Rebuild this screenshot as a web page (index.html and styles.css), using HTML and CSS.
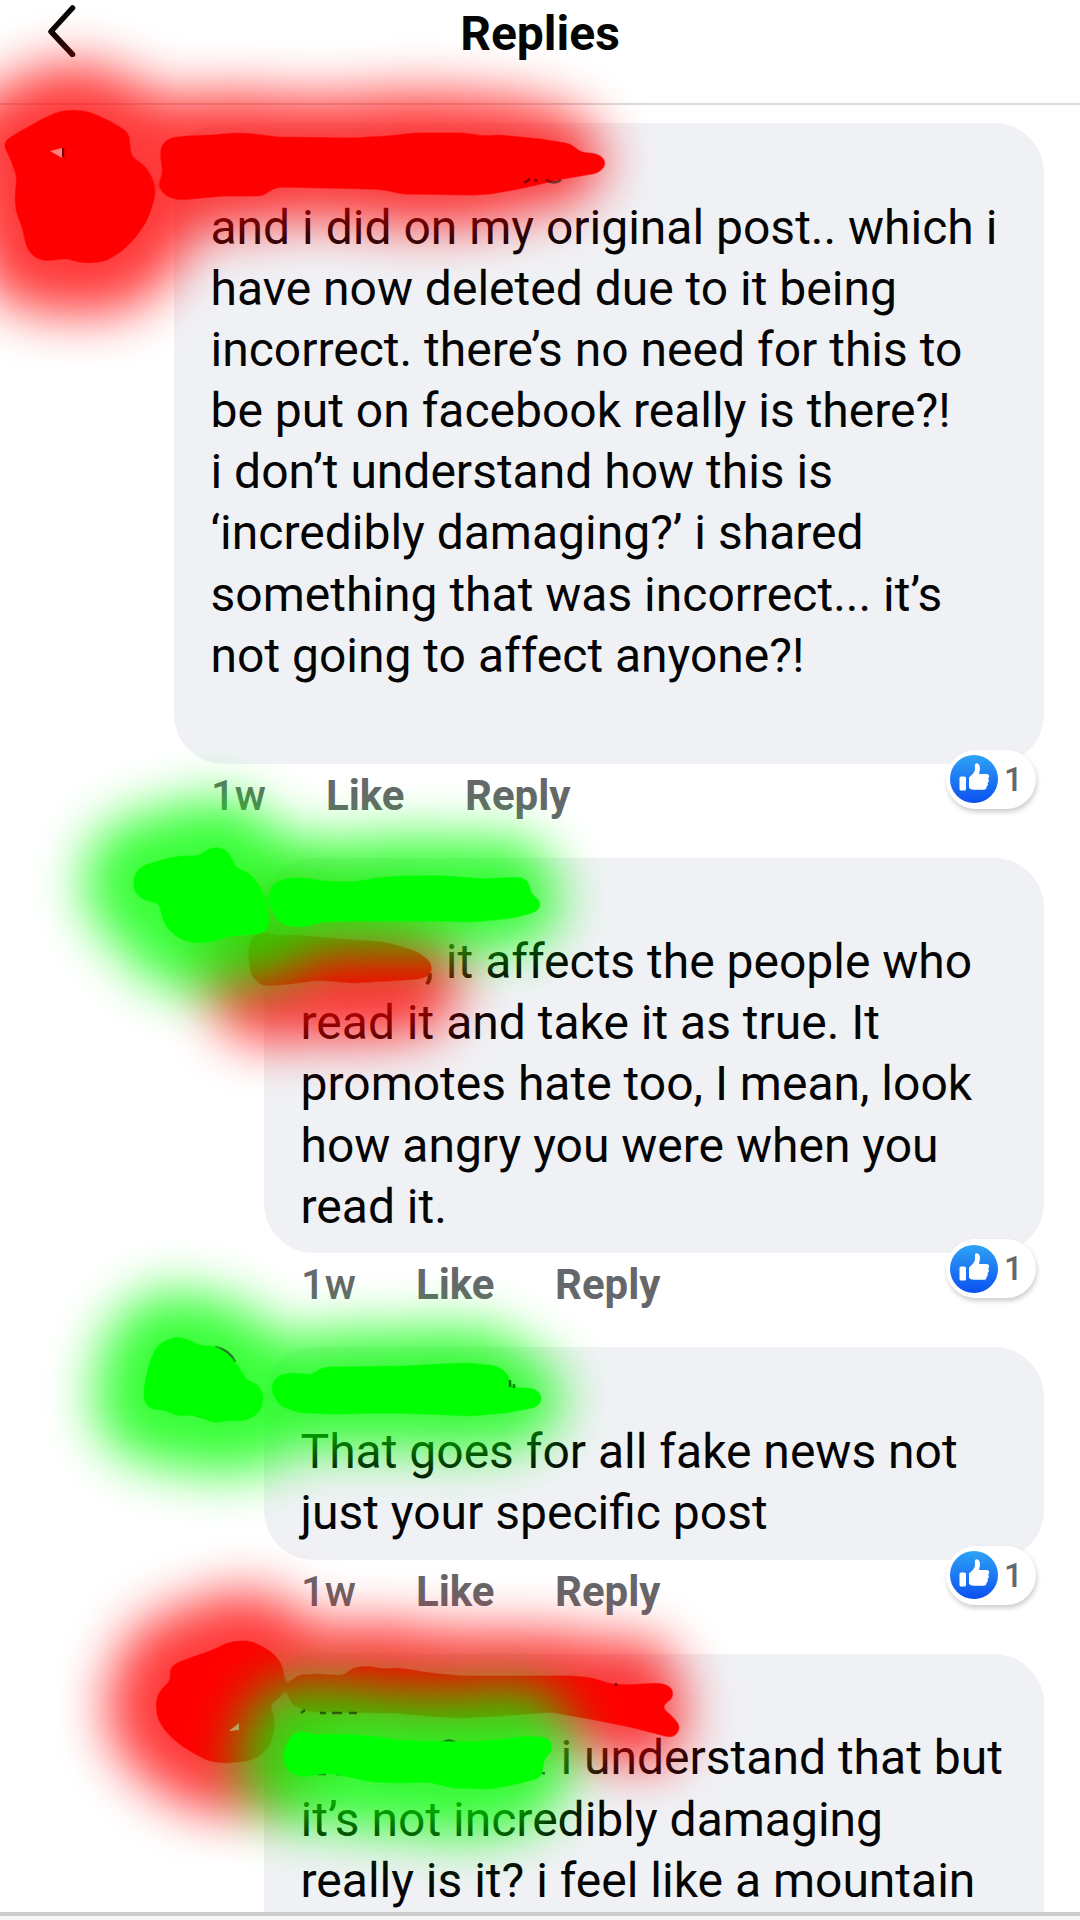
FILE: index.html
```html
<!DOCTYPE html>
<html lang="en">
<head>
  <meta charset="UTF-8" />
  <meta name="viewport" content="width=device-width, initial-scale=1.0" />
  <title>Replies</title>
  <link rel="stylesheet" href="styles.css">
</head>
<body>
  <div class="screen">
    <header class="header">
      <svg class="back" viewBox="0 0 30 52"><path d="M26.500 3 5 26.500l21.500 23" /></svg>
      <h1>Replies</h1>
    </header>

    <main class="thread">
      <article class="comment">
        <div class="bubble">
          <div class="name"></div>
          <p>and i did on my original post.. which i<br>have now deleted due to it being<br>incorrect. there’s no need for this to<br>be put on facebook really is there?!<br>i don’t understand how this is<br>‘incredibly damaging?’ i shared<br>something that was incorrect... it’s<br>not going to affect anyone?!<br>&nbsp;</p>
        </div>
        <div class="actions"><span class="time">1w</span><span class="like">Like</span><span>Reply</span></div>
        <div class="reactions"><svg viewBox="0 0 48 48"><use href="#thumb" /></svg><span>1</span></div>
      </article>

      <article class="comment nested">
        <div class="bubble">
          <div class="name"></div>
          <p><span class="tag tag-short"></span>, it affects the people who<br>read it and take it as true. It<br>promotes hate too, I mean, look<br>how angry you were when you<br>read it.</p>
        </div>
        <div class="actions"><span class="time">1w</span><span class="like">Like</span><span>Reply</span></div>
        <div class="reactions"><svg viewBox="0 0 48 48"><use href="#thumb" /></svg><span>1</span></div>
      </article>

      <article class="comment nested">
        <div class="bubble">
          <div class="name"></div>
          <p>That goes for all fake news not<br>just your specific post</p>
        </div>
        <div class="actions"><span class="time">1w</span><span class="like">Like</span><span>Reply</span></div>
        <div class="reactions"><svg viewBox="0 0 48 48"><use href="#thumb" /></svg><span>1</span></div>
      </article>

      <article class="comment nested">
        <div class="bubble bubble-cut">
          <div class="name"></div>
          <p><span class="tag tag-long"></span>i understand that but<br>it’s not incredibly damaging<br>really is it? i feel like a mountain</p>
        </div>
      </article>
    </main>

    <div class="bottom-bar"></div>

    <!-- marker strokes over the avatars and names -->
    <svg class="marker" viewBox="0 0 1080 1920">
      <defs>
        <linearGradient id="blue" x1="0" y1="0" x2="0" y2="1">
          <stop offset="0" stop-color="#2ea3f5" />
          <stop offset="1" stop-color="#0c50f0" />
        </linearGradient>
        <g id="thumb">
          <circle cx="24" cy="24" r="24" fill="url(#blue)" />
          <rect x="9.500" y="21.500" width="6.500" height="14" rx="1.500" fill="#fff" />
          <path fill="#fff" d="M19 22.500c3-2.500 5.500-5 6-8 .2-2.500-.5-4 .2-5.500 1-1.500 4-.5 4.600 2.500.5 3-.3 5-.8 7.500h7.500c3 0 3.500 3 1.500 4.500 1.500 1.500 1 3.500-.5 4.500.8 1.500.2 3-1 3.800.2 2-1 3-3 3H24c-2.500 0-4-.8-5-2z" />
        </g>
        <filter id="soft" filterUnits="userSpaceOnUse" x="-150" y="-100" width="1380" height="2170">
          <feGaussianBlur stdDeviation="26" />
        </filter>
        <!-- rounds off the corners of the strokes -->
        <filter id="round" filterUnits="userSpaceOnUse" x="0" y="0" width="1080" height="1920" color-interpolation-filters="sRGB">
          <feGaussianBlur stdDeviation="4" />
          <feComponentTransfer><feFuncA type="linear" slope="8" intercept="-3.300" /></feComponentTransfer>
        </filter>
        <polygon id="a1" points="5,143 25,131 45,120 58,114 71,112 84,113 94,116 111,124 127,134 129,158 142,166 150,177 153,197 145,220 134,236 120,250 105,259 91,261 78,260 67,256 47,259 36,256 29,248 24,226 18,211 17,197 19,176 11,155" />
        <polygon id="b1" points="162,153 164,145 170,140 188,138 212,137 237,135 254,136 277,139 353,140 388,138 415,135 464,135 482,138 500,137 540,141 571,146 578,154 598,156 605,163 598,171 562,177 518,187 490,192 473,193 402,192 386,188 370,187 277,185 268,189 263,194 223,194 179,198 166,194 161,185 165,172" />
        <polygon id="b2" points="250,950 254,937 268,934 277,938 295,937 339,941 384,944 415,953 429,963 430,973 420,977 353,981 319,978 290,982 263,984 253,975" />
        <polygon id="a3" points="135,883 137,874 143,868 156,864 170,860 183,858 201,858 208,851 219,849 227,853 234,870 245,873 252,879 260,890 263,907 268,923 263,931 245,933 228,934 215,939 201,941 189,940 179,936 168,926 163,914 162,900 150,900 138,894" />
        <polygon id="b3" points="271,900 274,885 290,880 305,880 321,883 353,884 378,880 402,878 446,878 482,881 522,879 528,885 528,896 539,901 538,909 513,916 473,920 440,919 357,919 319,920 308,924 295,925 281,922" />
        <polygon id="a4" points="146,1388 151,1365 157,1350 164,1343 178,1339 189,1342 199,1348 215,1348 229,1358 240,1372 244,1382 257,1386 262,1398 258,1411 249,1417 240,1419 228,1418 217,1421 207,1418 195,1413 178,1414 162,1407 152,1408 146,1401" />
        <polygon id="b4" points="273,1390 276,1380 283,1376 293,1375 304,1376 313,1378 318,1372 327,1369 407,1368 440,1366 468,1365 497,1368 507,1376 509,1390 533,1390 541,1397 537,1405 505,1411 468,1414 427,1412 387,1411 338,1412 301,1411 281,1404" />
        <polygon id="a5" points="171,1670 177,1665 216,1651 227,1645 239,1643 250,1643 261,1648 272,1655 280,1665 283,1683 278,1698 265,1703 272,1715 273,1727 268,1745 259,1754 248,1759 225,1761 209,1759 194,1751 180,1742 168,1731 160,1719 158,1707 159,1697 164,1689 174,1681" />
        <polygon id="b5" points="289,1690 293,1681 299,1677 319,1676 346,1678 352,1670 368,1668 381,1671 399,1670 430,1675 462,1678 573,1678 592,1680 610,1686 627,1687 658,1685 670,1688 672,1697 654,1707 667,1714 679,1727 673,1736 631,1725 590,1717 551,1710 500,1714 462,1716 440,1715 395,1711 310,1710 293,1703" />
        <polygon id="b6" points="285,1757 290,1740 297,1734 303,1734 316,1737 328,1736 372,1738 395,1742 417,1743 471,1744 500,1742 529,1738 548,1740 551,1750 542,1757 540,1776 524,1780 507,1784 489,1787 453,1786 430,1780 400,1781 372,1780 350,1775 328,1771 301,1775 289,1769" />
      </defs>

      <g class="glow red">
        <use href="#a1" class="wide" transform="translate(0 3)" />
        <use href="#b1" transform="translate(18 -4) scale(.91 1)" />
      </g>
      <g class="ink red"><use href="#a1" /><use href="#b1" /></g>
      <path class="speck" d="M63 148v9M524 183l6-4M536 182v-3M546 180q8 5 15 0" />
      <path class="chip" d="M50 151l12-3v10z" />

      <g class="glow red"><use href="#b2" class="wide" transform="translate(26 8) scale(.9 1)" /></g>
      <g class="ink red"><use href="#b2" /></g>
      <g class="glow green">
        <use href="#a3" class="wide" />
        <use href="#b3" transform="translate(24 -4) scale(.93 1)" />
      </g>
      <g class="ink green"><use href="#a3" /><use href="#b3" /></g>

      <g class="glow green">
        <use href="#a4" class="wide" transform="translate(0 3)" />
        <use href="#b4" transform="translate(24 0) scale(.93 1)" />
      </g>
      <path class="speck" d="M215 1347q15 3 20 15M196 1415l7 2" />
      <g class="ink green"><use href="#a4" /><use href="#b4" /></g>
      <path class="speck" d="M510 1380v7M514 1384v4" />

      <g class="glow red">
        <use href="#a5" class="wide" />
        <use href="#b5" transform="translate(26 -8) scale(.92 1)" />
      </g>
      <g class="ink red"><use href="#a5" /><use href="#b5" /></g>
      <path class="chip" d="M229 1731l10-8v7z" />
      <g class="glow green"><use href="#b6" class="wide" transform="translate(26 0) scale(.91 1)" /></g>
      <path class="speck" d="M301 1713l4-3M320 1713h6M332 1713h10M349 1713h8M442 1743q7-5 14 0M616 1683v3M541 1760v10q0 4 4 3M318 1774h8M336 1774h12" />
      <g class="ink green"><use href="#b6" /></g>
    </svg>
  </div>
</body>
</html>
```
FILE: styles.css
```css
* {
  box-sizing: border-box;
}

body {
  margin: 0;
  background: #fff;
  color: #050505;
  font-family: Roboto, sans-serif;
}

.screen {
  position: relative;
  display: flex;
  flex-direction: column;
  width: 1080px;
  height: 1920px;
  overflow: hidden;
}

.header {
  display: grid;
  grid-template-columns: 1fr auto 1fr;
  flex: none;
  height: 105px;
  padding: 5px 46px 0;
  border-bottom: 2px solid #dcdcdc;
}

.back {
  width: 30px;
  height: 52px;
  fill: none;
  stroke: #050505;
  stroke-width: 5.5;
  stroke-linecap: round;
  stroke-linejoin: round;
}

.header h1 {
  margin: 0;
  font-size: 48px;
  font-weight: 700;
  line-height: 57px;
}

.thread {
  flex: none;
  height: 1807px;
  padding: 18px 36px 0 174px;
  overflow: hidden;
}

.comment {
  position: relative;
}

.nested {
  margin-left: 90px;
}

.bubble {
  padding: 14px 0 16.5px 36.5px;
  border-radius: 50px;
  background: #f0f1f5;
}

.bubble-cut {
  padding-bottom: 80px;
}

.name {
  height: 59.6px;
}

.bubble p {
  margin: 0;
  font-size: 48px;
  line-height: 61.15px;
  white-space: nowrap;
}

.tag {
  display: inline-block;
}

.tag-short {
  width: 124px;
}

.tag-long {
  width: 260px;
}

.actions {
  display: flex;
  height: 94px;
  padding: 7px 0 0 37px;
  color: #65676b;
  font-size: 42px;
  font-weight: 700;
  line-height: 49px;
}

.actions .time {
  width: 115px;
  font-weight: 500;
}

.actions .like {
  width: 139px;
}

.reactions {
  position: absolute;
  right: 8px;
  bottom: 49px;
  display: flex;
  align-items: center;
  width: 90px;
  height: 59px;
  padding-left: 4px;
  gap: 6px;
  border-radius: 30px;
  background: #fff;
  box-shadow: 1px 3px 5px rgba(0, 0, 0, 0.2);
  color: #65676b;
  font-size: 33px;
  font-weight: 500;
}

.reactions svg {
  width: 48px;
  height: 48px;
}

.bottom-bar {
  flex: none;
  height: 8px;
  border-top: 4px solid #cbcccd;
  background: #f7f7f7;
}

.marker {
  position: absolute;
  top: 0;
  left: 0;
  width: 1080px;
  height: 1920px;
}

.red {
  fill: #f00;
  stroke: #f00;
}

.green {
  fill: #0f0;
  stroke: #0f0;
}

.ink {
  stroke-width: 4;
  stroke-linejoin: round;
  filter: url(#round);
}

.glow {
  stroke-width: 76;
  stroke-linejoin: round;
  opacity: 0.78;
  filter: url(#soft);
}

.glow .wide {
  stroke-width: 102;
}

.speck {
  fill: none;
  stroke: #000;
  stroke-width: 2.5;
  opacity: 0.5;
}

.chip {
  fill: #fff;
  opacity: 0.5;
}
```
